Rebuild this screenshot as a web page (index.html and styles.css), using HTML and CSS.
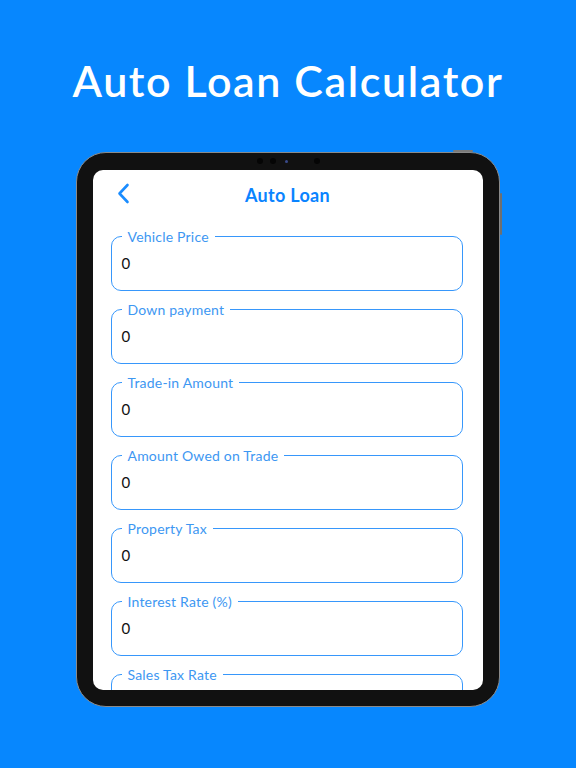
FILE: index.html
```html
<!DOCTYPE html>
<html>
<head>
<meta charset="utf-8">
<link rel="stylesheet" href="styles.css">
</head>
<body>
<div class="page">
  <h1 class="headline">Auto Loan Calculator</h1>
  <div class="device">
    <div class="btn-top"></div>
    <div class="btn-side"></div>
    <div class="camera">
      <span class="dot"></span><span class="dot"></span><span class="dot tiny"></span><span class="dot gap"></span>
    </div>
    <div class="screen">
      <div class="navbar">
        <svg class="back" width="14" height="22" viewBox="0 0 14 22"><path d="M10.5 2 L2.5 10.5 L10.5 19" fill="none" stroke="#1a8cff" stroke-width="2.6" stroke-linecap="round" stroke-linejoin="round"/></svg>
        <div class="nav-title">Auto Loan</div>
      </div>
      <div class="fields">
        <fieldset class="field"><legend>Vehicle Price</legend><div class="value">0</div></fieldset>
        <fieldset class="field"><legend>Down payment</legend><div class="value">0</div></fieldset>
        <fieldset class="field"><legend>Trade-in Amount</legend><div class="value">0</div></fieldset>
        <fieldset class="field"><legend>Amount Owed on Trade</legend><div class="value">0</div></fieldset>
        <fieldset class="field"><legend>Property Tax</legend><div class="value">0</div></fieldset>
        <fieldset class="field"><legend>Interest Rate (%)</legend><div class="value">0</div></fieldset>
        <fieldset class="field"><legend>Sales Tax Rate</legend><div class="value">0</div></fieldset>
      </div>
    </div>
  </div>
</div>
</body>
</html>
```
FILE: styles.css
```css
html, body {
  margin: 0;
  padding: 0;
}
body {
  background: #0787fe;
  width: 576px;
  height: 768px;
  overflow: hidden;
  font-family: Lato, "Open Sans", sans-serif;
}
.page {
  display: flex;
  flex-direction: column;
  align-items: center;
}
.headline {
  margin: 0;
  padding-top: 56px;
  height: 96px;
  box-sizing: border-box;
  line-height: 50px;
  font-size: 43px;
  font-weight: 600;
  color: #ffffff;
  letter-spacing: 1.6px;
}
.device {
  position: relative;
  margin-top: 56px;
  width: 424px;
  height: 555px;
  box-sizing: border-box;
  background: #111111;
  border: 1.5px solid #8a8a8a;
  border-radius: 30px;
  padding: 16.5px 16px 15px 15.5px;
}
.btn-top {
  position: absolute;
  top: -3px;
  right: 26px;
  width: 20px;
  height: 2px;
  background: #7a7a7a;
  border-radius: 1px;
}
.btn-side {
  position: absolute;
  right: -3px;
  top: 40px;
  width: 2px;
  height: 42px;
  background: #6f6f6f;
  border-radius: 1px;
}
.camera {
  position: absolute;
  top: 5px;
  left: 180px;
  display: flex;
  align-items: center;
  gap: 7px;
}
.dot {
  width: 6px;
  height: 6px;
  border-radius: 50%;
  background: #050505;
}
.dot.tiny {
  width: 3px;
  height: 3px;
  background: #3a4a8a;
  margin: 0 2px;
}
.dot.gap {
  margin-left: 17px;
}
.screen {
  width: 390px;
  height: 520px;
  background: #ffffff;
  border-radius: 10px;
  overflow: hidden;
}
.navbar {
  position: relative;
  height: 48px;
  display: flex;
  align-items: center;
  justify-content: center;
}
.back {
  position: absolute;
  left: 24px;
  top: 13px;
}
.nav-title {
  font-size: 18px;
  font-weight: 700;
  color: #0a84ff;
  margin-top: 2px;
  letter-spacing: 0.3px;
}
.fields {
  display: flex;
  flex-direction: column;
  gap: 11px;
  padding: 11px 20px 0 18px;
}
.field {
  margin: 0;
  padding: 0 10px;
  height: 62px;
  box-sizing: border-box;
  border: 1.6px solid #3797fb;
  border-radius: 10px;
  min-width: 0;
}
.field legend {
  margin-left: 0;
  padding: 0 6px;
  font-size: 14px;
  line-height: 16px;
  color: #3d97f2;
  letter-spacing: 0.2px;
}
.value {
  font-size: 15px;
  color: #111111;
  line-height: 20px;
  margin-top: 8px;
}
```
